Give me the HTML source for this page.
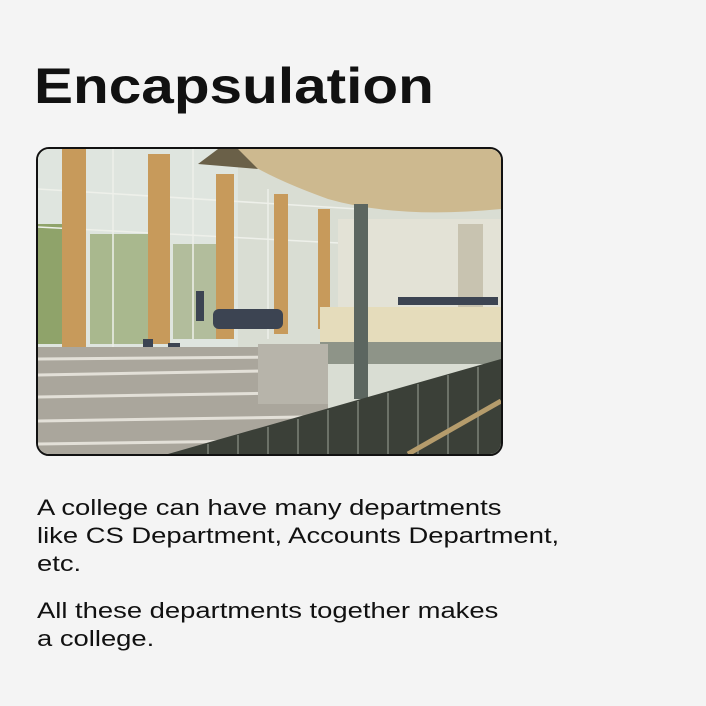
<!DOCTYPE html>
<html><head><meta charset="utf-8"><style>
html,body{margin:0;padding:0;}
body{width:706px;height:706px;background:#f4f4f4;position:relative;overflow:hidden;font-family:"Liberation Sans",sans-serif;color:#111;}
h1{position:absolute;left:34px;top:58px;margin:0;font-size:50px;font-weight:bold;line-height:56px;transform:scaleX(1.17);transform-origin:0 0;white-space:nowrap;}
.img{position:absolute;left:36px;top:147px;width:463px;height:305px;border:2px solid #111;border-radius:13px;overflow:hidden;background:#dcdcd2;}
.p{position:absolute;left:37px;margin:0;font-size:22px;line-height:28px;transform:scaleX(1.245);transform-origin:0 0;white-space:nowrap;}
</style></head><body>
<h1>Encapsulation</h1>
<div class="img">
<svg width="463" height="305" viewBox="0 0 463 305">
<rect width="463" height="305" fill="#d9ddd3"/>
<rect x="0" y="0" width="200" height="200" fill="#dfe5df"/>
<rect x="0" y="75" width="25" height="120" fill="#8fa36a"/>
<rect x="52" y="85" width="65" height="110" fill="#a9b88e"/>
<rect x="135" y="95" width="50" height="95" fill="#b2bd9c"/>
<g stroke="#eef0ea" stroke-width="1.5">
<line x1="0" y1="40" x2="320" y2="60"/><line x1="0" y1="78" x2="320" y2="95"/>
<line x1="75" y1="0" x2="75" y2="200"/><line x1="155" y1="0" x2="155" y2="190"/><line x1="230" y1="40" x2="230" y2="190"/>
</g>
<g fill="#c79a5b">
<rect x="24" y="0" width="24" height="200"/>
<rect x="110" y="5" width="22" height="190"/>
<rect x="178" y="25" width="18" height="165"/>
<rect x="236" y="45" width="14" height="140"/>
<rect x="280" y="60" width="12" height="120"/>
</g>
<path d="M190 0 H463 V60 Q360 70 290 50 Q220 25 190 0Z" fill="#cdb98f"/>
<path d="M180 0 H200 L220 20 L160 15Z" fill="#6a6048"/>
<rect x="300" y="70" width="163" height="90" fill="#e3e2d6"/>
<rect x="420" y="75" width="25" height="90" fill="#c8c3b0"/>
<g fill="#3c4452">
<rect x="158" y="142" width="8" height="30"/>
<rect x="175" y="160" width="70" height="20" rx="6"/>
<rect x="105" y="190" width="10" height="25"/>
<rect x="130" y="194" width="12" height="14"/>
<rect x="360" y="148" width="100" height="8"/>
</g>
<rect x="282" y="158" width="181" height="35" fill="#e5dcbb"/>
<rect x="282" y="193" width="181" height="22" fill="#8e9488"/>
<rect x="0" y="198" width="290" height="107" fill="#aaa69c"/>
<g stroke="#e3e0d8" stroke-width="3">
<line x1="0" y1="210" x2="250" y2="208"/><line x1="0" y1="226" x2="225" y2="222"/>
<line x1="0" y1="248" x2="245" y2="244"/><line x1="0" y1="272" x2="265" y2="268"/><line x1="0" y1="295" x2="220" y2="292"/>
</g>
<rect x="220" y="195" width="70" height="60" fill="#b7b4aa"/>
<rect x="316" y="55" width="14" height="195" fill="#5c6660"/>
<path d="M130 305 L463 210 V305Z" fill="#3b4038"/>
<g stroke="#6c7268" stroke-width="2">
<line x1="170" y1="295" x2="170" y2="305"/><line x1="200" y1="286" x2="200" y2="305"/><line x1="230" y1="278" x2="230" y2="305"/><line x1="260" y1="270" x2="260" y2="305"/><line x1="290" y1="261" x2="290" y2="305"/><line x1="320" y1="252" x2="320" y2="305"/><line x1="350" y1="244" x2="350" y2="305"/><line x1="380" y1="235" x2="380" y2="305"/><line x1="410" y1="226" x2="410" y2="305"/><line x1="440" y1="218" x2="440" y2="305"/>
</g>
<path d="M370 305 L463 252" stroke="#b59c6c" stroke-width="5"/>
</svg>
</div>
<p class="p" style="top:494px">A college can have many departments<br>like CS Department, Accounts Department,<br>etc.</p>
<p class="p" style="top:597px">All these departments together makes<br>a college.</p>
</body></html>
